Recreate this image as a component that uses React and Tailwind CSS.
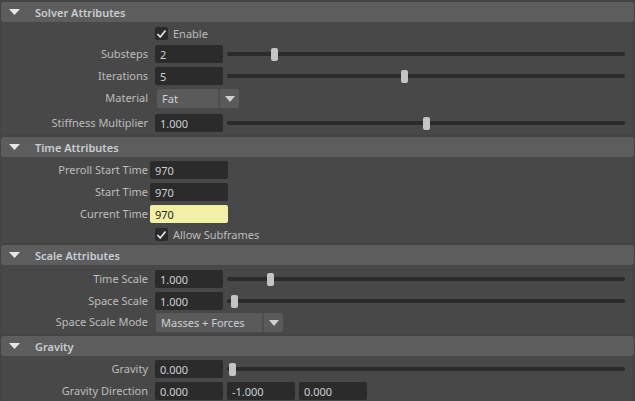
import React from 'react';

const FONT = { fontFamily: '"Noto Sans", "Open Sans", sans-serif' };

const Header = ({ title }) => (
  <div className="mt-[2px] mx-[1px] h-[20px] rounded-[3px] bg-[#5d5d5d] flex items-center">
    <svg width="11" height="6" viewBox="0 0 11 6" className="ml-[8px]">
      <polygon points="0,0 11,0 5.5,6" fill="#e6e6e6" />
    </svg>
    <span className="ml-[15px] text-[11px] font-semibold text-[#c9ced4] leading-none">{title}</span>
  </div>
);

const Label = ({ children }) => (
  <div className="w-[147px] shrink-0 text-right text-[11px] leading-[18px] text-[#bdbdbd] whitespace-nowrap">
    {children}
  </div>
);

const Field = ({ value, w = 'w-[68px]', yellow }) => (
  <div
    className={`${w} h-[18px] shrink-0 rounded-[2px] pl-[5px] text-[11px] leading-[19px] ${
      yellow ? 'bg-[#f2f0a4] text-[#1c1c1c]' : 'bg-[#2b2b2b] text-[#cdd0d4]'
    }`}
  >
    {value}
  </div>
);

const Slider = ({ pos }) => (
  <div className="relative ml-[4px] w-[398px] h-[18px] flex items-center">
    <div className="w-full h-[4px] rounded-[2px] bg-[#2b2b2b]" />
    <div
      className="absolute top-[3px] w-[7px] h-[13px] rounded-[2px] bg-[#c4c4c4]"
      style={{ left: pos }}
    />
  </div>
);

const Check = ({ label }) => (
  <div className="flex items-center">
    <div className="w-[13px] h-[13px] rounded-[2px] bg-[#2b2b2b] flex items-center justify-center">
      <svg width="11" height="10" viewBox="0 0 11 10">
        <polyline points="1.5,5 4.2,8 9.5,1.5" fill="none" stroke="#e8e8e8" strokeWidth="1.7" />
      </svg>
    </div>
    <span className="ml-[5px] text-[11px] text-[#bdbdbd] leading-none">{label}</span>
  </div>
);

const Dropdown = ({ value, w, main }) => (
  <div className={`${w} h-[19px] flex rounded-[2px] overflow-hidden`}>
    <div className={`${main} h-full bg-[#5a5a5a] pl-[5px] text-[11px] leading-[20px] text-[#cdd0d4]`}>{value}</div>
    <div className="w-[2px] h-full bg-[#4e4e4e]" />
    <div className="flex-1 h-full bg-[#5a5a5a] flex items-center justify-center">
      <svg width="10" height="6" viewBox="0 0 10 6">
        <polygon points="0,0 10,0 5,6" fill="#d0d0d0" />
      </svg>
    </div>
  </div>
);

const Row = ({ label, h = 'h-[22px]', children, gap = 'ml-[7px]' }) => (
  <div className={`${h} flex items-start pt-[2px]`}>
    <Label>{label}</Label>
    <div className={`${gap} flex items-start`}>{children}</div>
  </div>
);

export default function App() {
  return (
    <div className="w-[635px] h-[401px] bg-[#444444] overflow-hidden" style={FONT}>
      <Header title="Solver Attributes" />
      <div className="ml-[1px] mr-[3px] bg-[#484848] pt-[2px] pb-[1px]">
        <div className="h-[19px] flex items-start pt-[3px] pl-[154px]">
          <Check label="Enable" />
        </div>
        <Row label="Substeps">
          <Field value="2" />
          <Slider pos={44} />
        </Row>
        <Row label="Iterations">
          <Field value="5" />
          <Slider pos={174} />
        </Row>
        <Row label="Material" h="h-[25px]" gap="ml-[9px]">
          <Dropdown value="Fat" w="w-[82px]" main="w-[61px]" />
        </Row>
        <Row label="Stiffness Multiplier">
          <Field value="1.000" />
          <Slider pos={196} />
        </Row>
      </div>

      <Header title="Time Attributes" />
      <div className="ml-[1px] mr-[3px] bg-[#484848] pt-[2px]">
        <Row label="Preroll Start Time" gap="ml-[2px]">
          <Field value="970" w="w-[78px]" />
        </Row>
        <Row label="Start Time" gap="ml-[2px]">
          <Field value="970" w="w-[78px]" />
        </Row>
        <Row label="Current Time" gap="ml-[2px]">
          <Field value="970" w="w-[78px]" yellow />
        </Row>
        <div className="h-[18px] flex items-start pt-[3px] pl-[154px]">
          <Check label="Allow Subframes" />
        </div>
      </div>

      <Header title="Scale Attributes" />
      <div className="ml-[1px] mr-[3px] bg-[#484848] pt-[3px]">
        <Row label="Time Scale">
          <Field value="1.000" />
          <Slider pos={40} />
        </Row>
        <Row label="Space Scale">
          <Field value="1.000" />
          <Slider pos={4} />
        </Row>
        <div className="h-[22px] flex items-start pt-[1px]">
          <Label>Space Scale Mode</Label>
          <div className="ml-[8px]">
            <Dropdown value="Masses + Forces" w="w-[127px]" main="w-[106px]" />
          </div>
        </div>
      </div>

      <Header title="Gravity" />
      <div className="ml-[1px] mr-[3px] bg-[#484848] pt-[2px] h-[60px]">
        <Row label="Gravity">
          <Field value="0.000" />
          <Slider pos={2} />
        </Row>
        <Row label="Gravity Direction">
          <div className="flex gap-[4px]">
            <Field value="0.000" />
            <Field value="-1.000" />
            <Field value="0.000" />
          </div>
        </Row>
      </div>
    </div>
  );
}
